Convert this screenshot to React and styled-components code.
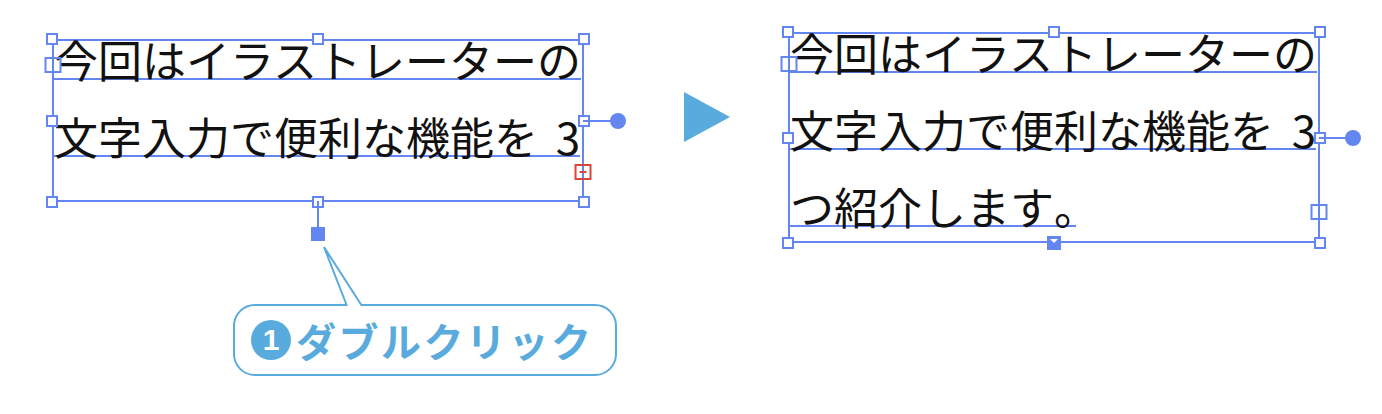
import React from 'react';
import styled, { createGlobalStyle } from 'styled-components';

const frameBlue = '#6486f0';
const accent = '#5aabdd';
const alert = '#d9453a';

const GlobalStyle = createGlobalStyle`
  body {
    margin: 0;
    background: #fff;
    font-family: 'Noto Sans CJK JP', 'Noto Sans', sans-serif;
  }
`;

const Scene = styled.div`
  display: flex;
  align-items: flex-start;
  width: 1382px;
  height: 414px;
  overflow: hidden;
`;

const LeftColumn = styled.div`
  flex: none;
  display: flex;
  flex-direction: column;
  align-items: flex-start;
  width: 532px;
  margin: 39px 0 0 52px;
`;

const TextFrame = styled.div`
  flex: none;
  position: relative;
  box-sizing: border-box;
  width: ${({ $width }) => $width}px;
  height: ${({ $height }) => $height}px;
  margin: ${({ $margin }) => $margin || 0};
  border: 2px solid ${frameBlue};
`;

const Line = styled.div`
  width: fit-content;
  height: 37px;
  font-size: 44px;
  line-height: 37px;
  word-spacing: 8px;
  color: #111;
  white-space: nowrap;
  border-bottom: 2px solid ${frameBlue};

  & + & {
    margin-top: 38px;
  }
`;

// the closing 。 is set half-width, so the baseline rule stops at the glyph
const HalfWidth = styled.span`
  font-feature-settings: 'halt';
`;

// the eight bounding-box handles, laid over the frame edge on a 3x3 grid
const HandleGrid = styled.div`
  position: absolute;
  inset: -8px;
  display: grid;
  grid-template-columns: 12px 1fr 12px;
  grid-template-rows: 12px 1fr 12px;
  pointer-events: none;
`;

const Handle = styled.span`
  grid-column: ${({ $col }) => $col};
  grid-row: ${({ $row }) => $row};
  justify-self: center;
  align-self: center;
  width: 8px;
  height: 8px;
  background: #fff;
  border: 2px solid ${frameBlue};
`;

const Port = styled.span`
  position: absolute;
  left: ${({ $side }) => ($side === 'right' ? 'calc(100% + 1px)' : '-1px')};
  top: ${({ $y }) => $y};
  width: 13px;
  height: 12px;
  transform: translate(-50%, -50%);
  border: 2px solid ${({ $overflow }) => ($overflow ? alert : frameBlue)};

  &::after {
    content: '';
    display: ${({ $overflow }) => ($overflow ? 'block' : 'none')};
    position: absolute;
    left: 3px;
    top: 5px;
    width: 7px;
    height: 2px;
    background: ${alert};
  }
`;

const Knob = styled.span`
  position: absolute;
  left: calc(100% + 1px);
  top: calc(50% - 1px);
  width: ${({ $reach }) => $reach}px;
  height: 2px;
  background: ${frameBlue};

  &::after {
    content: '';
    position: absolute;
    right: -8px;
    top: -7px;
    width: 16px;
    height: 16px;
    border-radius: 50%;
    background: ${frameBlue};
  }
`;

const Stem = styled.span`
  position: absolute;
  left: calc(50% - 1px);
  top: calc(100% + 1px);
  width: 2px;
  height: 27px;
  background: ${frameBlue};

  &::after {
    content: '';
    position: absolute;
    left: -6px;
    top: 26px;
    width: 14px;
    height: 14px;
    background: ${frameBlue};
  }
`;

const AutoSize = styled.span`
  grid-column: 2;
  grid-row: 3;
  justify-self: center;
  align-self: center;
  position: relative;
  width: 14px;
  height: 14px;
  background: ${frameBlue};

  &::after {
    content: '';
    position: absolute;
    left: 3px;
    top: 3px;
    border-left: 4px solid transparent;
    border-right: 4px solid transparent;
    border-top: 4px solid #fff;
  }
`;

const PlayArrow = styled.div`
  flex: none;
  width: 0;
  height: 0;
  margin: 92px 0 0 100px;
  border-left: 46px solid ${accent};
  border-top: 25.5px solid transparent;
  border-bottom: 25.5px solid transparent;
`;

const Callout = styled.div`
  flex: none;
  position: relative;
  display: flex;
  align-items: center;
  gap: 5px;
  box-sizing: border-box;
  width: 384px;
  height: 72px;
  margin: 102px 0 0 181px;
  padding-left: 16px;
  border: 2px solid ${accent};
  border-radius: 22px;
  background: #fff;
`;

const Tail = styled.svg`
  position: absolute;
  left: 83px;
  top: -62px;
  overflow: visible;
`;

const StepBadge = styled.span`
  display: flex;
  align-items: center;
  justify-content: center;
  width: 40px;
  height: 40px;
  border-radius: 50%;
  background: ${accent};
  color: #fff;
  font-family: 'Liberation Sans', 'Noto Sans', sans-serif;
  font-size: 30px;
  font-weight: 700;
  line-height: 1;
`;

const CalloutText = styled.span`
  font-size: 40px;
  font-weight: 700;
  letter-spacing: 2.5px;
  line-height: 1;
  color: ${accent};
`;

const boxHandles = [
  [1, 1],
  [2, 1],
  [3, 1],
  [1, 2],
  [3, 2],
  [1, 3],
  [3, 3],
];

const Handles = ({ autoSize }) => (
  <HandleGrid>
    {boxHandles.map(([col, row]) => (
      <Handle key={`${col}-${row}`} $col={col} $row={row} />
    ))}
    {autoSize ? <AutoSize /> : <Handle $col={2} $row={3} />}
  </HandleGrid>
);

const App = () => (
  <>
    <GlobalStyle />
    <Scene>
      <LeftColumn>
        <TextFrame $width={532} $height={163}>
          <Line>今回はイラストレーターの</Line>
          <Line>文字入力で便利な機能を 3</Line>
          <Handles />
          <Port $y="24px" />
          <Port $side="right" $y="131px" $overflow />
          <Knob $reach={35} />
          <Stem />
        </TextFrame>

        <Callout>
          <Tail width="50" height="64">
            <polygon points="6,3 29,62 44,62" fill="#fff" />
            <polyline points="29,62 6,3 44,62" fill="none" stroke={accent} strokeWidth="2" />
          </Tail>
          <StepBadge>1</StepBadge>
          <CalloutText>ダブルクリック</CalloutText>
        </Callout>
      </LeftColumn>

      <PlayArrow />

      <TextFrame $width={532} $height={211} $margin="32px 0 0 58px">
        <Line>今回はイラストレーターの</Line>
        <Line>文字入力で便利な機能を 3</Line>
        <Line>
          つ紹介します<HalfWidth>。</HalfWidth>
        </Line>
        <Handles autoSize />
        <Port $y="30px" />
        <Port $side="right" $y="178px" />
        <Knob $reach={34} />
      </TextFrame>
    </Scene>
  </>
);

export default App;
